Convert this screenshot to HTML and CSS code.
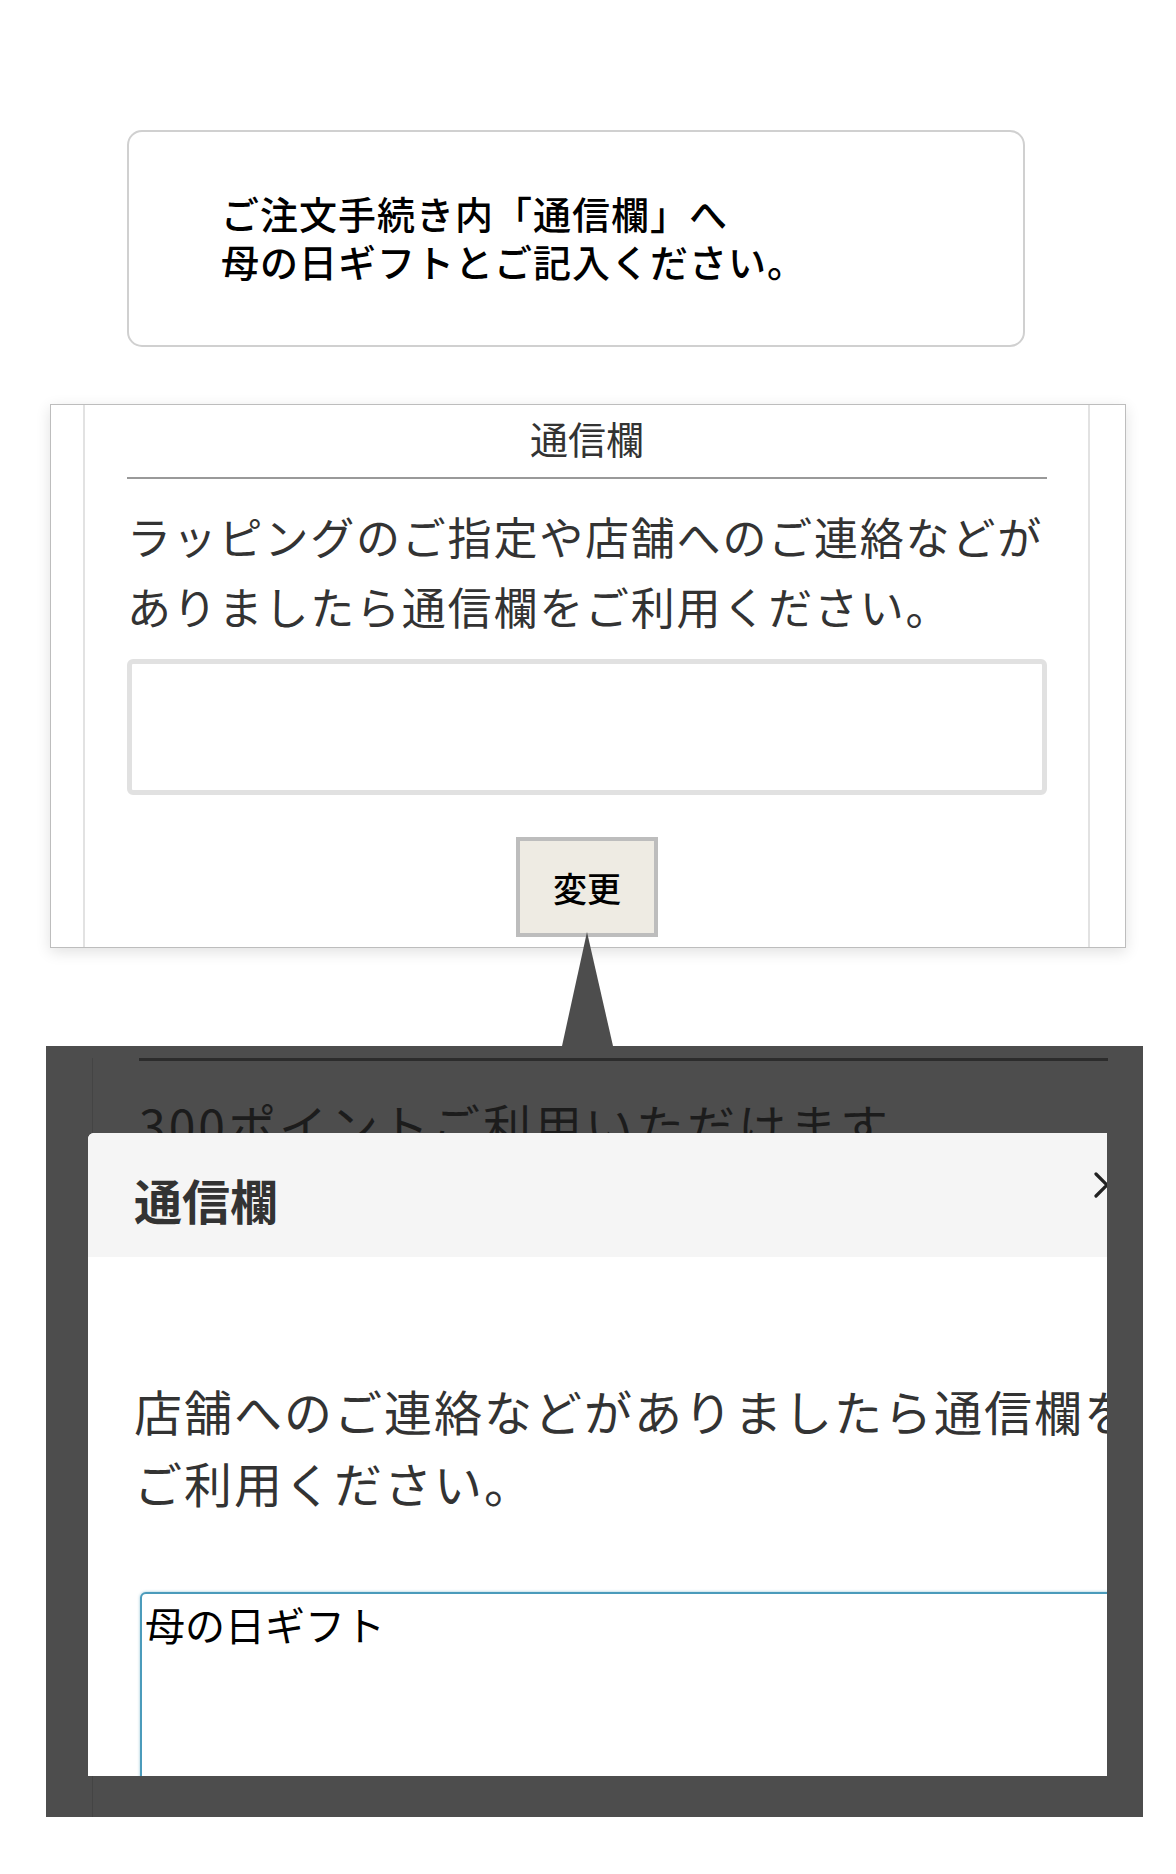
FILE: index.html
```html
<!DOCTYPE html>
<html lang="ja">
<head>
  <meta charset="UTF-8">
  <title>通信欄のご案内</title>
  <meta name="viewport" content="width=device-width, initial-scale=1.0">
  <link rel="stylesheet" href="styles.css">
</head>
<body>

<div class="page">
  <div class="notice">
    <p>ご注文手続き内「通信欄」へ<br>母の日ギフトとご記入ください。</p>
  </div>

  <div class="memo-wrap">
    <div class="memo-card">
      <div class="memo-inner">
        <h3 class="memo-title">通信欄</h3>
        <p class="memo-text">ラッピングのご指定や店舗へのご連絡などがありましたら通信欄をご利用ください。</p>
        <textarea class="memo-field"></textarea>
        <div class="memo-actions">
          <button class="btn-change" type="button">変更</button>
        </div>
      </div>
    </div>
    <div class="pointer"></div>
  </div>

  <div class="shot">
    <div class="shot-page">
      <div class="shot-rule"></div>
      <p class="shot-text">300ポイントご利用いただけます。</p>
    </div>

    <div class="modal">
      <div class="modal-head">
        <h3>通信欄</h3>
        <svg class="modal-close" width="26" height="26" viewBox="0 0 26 26">
          <path d="M2 2 L24 24 M24 2 L2 24" stroke="#222" stroke-width="3.2" stroke-linecap="round"/>
        </svg>
      </div>
      <div class="modal-body">
        <p>店舗へのご連絡などがありましたら通信欄をご利用ください。</p>
        <textarea class="modal-field">母の日ギフト</textarea>
      </div>
    </div>
  </div>
</div>

</body>
</html>
```

FILE: styles.css
```css
* {
  box-sizing: border-box;
  font-family: "Noto Sans CJK JP", "Noto Sans", sans-serif;
}
body {
  margin: 0;
  padding: 0;
  background: #fff;
}
.page {
  padding: 130px 0 57px;
}

/* top notice box */
.notice {
  margin-left: 127px;
  width: 898px;
  height: 217px;
  border: 2px solid #d0d0d0;
  border-radius: 15px;
  display: flex;
  align-items: center;
  padding-left: 92px;
}
.notice p {
  margin: 0 0 4px;
  font-size: 38px;
  line-height: 48px;
  letter-spacing: 1px;
  font-weight: 500;
  color: #000;
}

/* memo card */
.memo-wrap {
  position: relative;
  margin-top: 57px;
}
.memo-card {
  margin-left: 50px;
  width: 1076px;
  height: 544px;
  background: #fff;
  border: 1px solid #bdbdbd;
  box-shadow: 0 4px 14px rgba(0,0,0,0.12);
  display: flex;
}
.memo-inner {
  flex: 1;
  margin: 0 35px 0 32px;
  border-left: 2px solid #e2e2e2;
  border-right: 2px solid #e2e2e2;
  padding: 4px 41px 0 42px;
  display: flex;
  flex-direction: column;
}
.memo-title {
  margin: 0;
  text-align: center;
  font-size: 38px;
  line-height: 57px;
  font-weight: 400;
  color: #333;
  padding-bottom: 11px;
  border-bottom: 2px solid #999;
}
.memo-text {
  margin: 22px 0 0;
  font-size: 44px;
  line-height: 70px;
  letter-spacing: 1.8px;
  font-weight: 400;
  color: #333;
}
.memo-field {
  margin-top: 18px;
  width: 100%;
  height: 136px;
  border: 5px solid #e1e1e1;
  border-radius: 6px;
  resize: none;
  background: #fff;
}
.memo-actions {
  display: flex;
  justify-content: center;
  margin-top: 42px;
}
.btn-change {
  width: 142px;
  height: 100px;
  background: #eeebe3;
  border: 4px solid #bdbdbd;
  font-size: 34px;
  font-weight: 500;
  color: #000;
  padding: 0;
  cursor: pointer;
}
.pointer {
  position: absolute;
  left: 562px;
  top: 528px;
  width: 0;
  height: 0;
  border-left: 25px solid transparent;
  border-right: 26px solid transparent;
  border-bottom: 114px solid #4d4d4d;
}

/* dimmed screenshot with modal */
.shot {
  position: relative;
  margin: 98px 0 0 46px;
  width: 1097px;
  height: 771px;
  background: #4d4d4d;
  overflow: hidden;
}
.shot-page {
  height: 100%;
  margin-left: 46px;
  border-left: 1px solid #444;
  padding-left: 46px;
}
.shot-rule {
  margin-top: 12px;
  width: 969px;
  height: 3px;
  background: #2c2c2c;
}
.shot-text {
  margin: 34px 0 0;
  font-size: 48px;
  line-height: 58px;
  letter-spacing: 3px;
  font-weight: 400;
  color: #1c1c1c;
}
.modal {
  position: absolute;
  left: 42px;
  top: 87px;
  width: 1019px;
  height: 643px;
  background: #fff;
  border-radius: 6px 0 0 0;
  overflow: hidden;
}
.modal-head {
  position: relative;
  height: 124px;
  background: #f5f5f5;
  padding: 36px 0 0 46px;
}
.modal-head h3 {
  margin: 0;
  font-size: 48px;
  line-height: 60px;
  font-weight: 700;
  color: #333;
}
.modal-close {
  position: absolute;
  left: 1006px;
  top: 39px;
}
.modal-body {
  width: 1200px;
  padding: 117px 0 0 46px;
}
.modal-body p {
  width: 1020px;
  margin: 0;
  font-size: 48px;
  line-height: 72px;
  letter-spacing: 2px;
  font-weight: 400;
  color: #333;
}
.modal-field {
  display: block;
  margin: 74px 0 0 6px;
  width: 1100px;
  height: 260px;
  border: 2px solid #4b9bbb;
  border-radius: 6px;
  box-shadow: 0 0 3px rgba(75,155,187,0.6);
  padding: 6px 3px;
  font-size: 40px;
  line-height: 48px;
  color: #000;
  resize: none;
  outline: none;
}
```
